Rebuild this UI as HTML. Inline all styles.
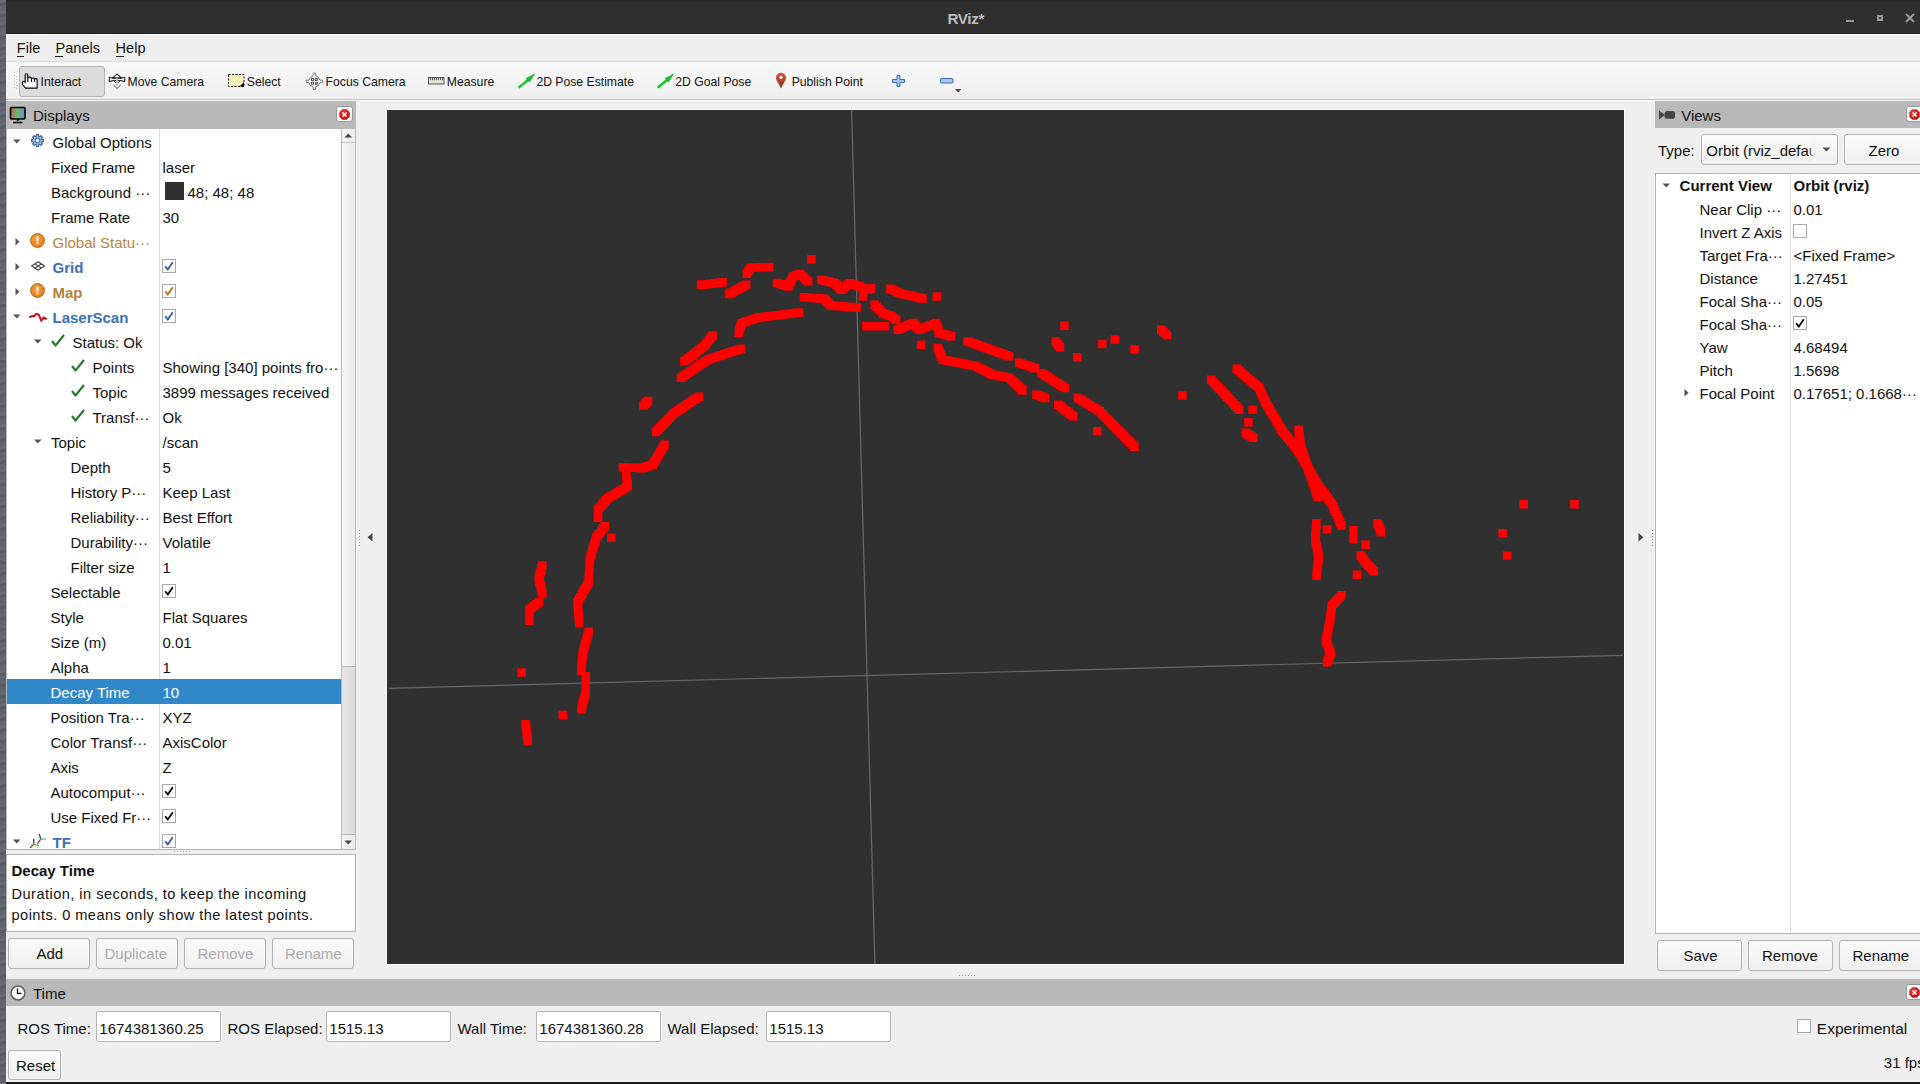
<!DOCTYPE html><html><head><meta charset="utf-8"><style>
html,body{margin:0;padding:0;}
body{width:1920px;height:1084px;overflow:hidden;position:relative;background:#5c616b;font-family:"Liberation Sans", sans-serif;}
.r{position:absolute;box-sizing:border-box;}
.t{position:absolute;white-space:nowrap;line-height:1;font-family:"Liberation Sans", sans-serif;}

</style></head><body>
<div class="r" style="left:0px;top:0px;width:6px;height:1084px;background:#5c616c;"></div>
<div class="r" style="left:0px;top:0px;width:6px;height:1084px;background:repeating-linear-gradient(170deg,rgba(255,255,255,0.05) 0 3px,rgba(0,0,0,0.06) 3px 6px,rgba(255,255,255,0.02) 6px 11px);"></div>
<div class="r" style="left:6px;top:0px;width:1914px;height:34px;background:#2f2f2f;"></div>
<div class="r" style="left:6px;top:0px;width:1914px;height:2px;background:#262626;"></div>
<div class="r" style="left:6px;top:33px;width:1914px;height:1px;background:#202020;"></div>
<div class="t" style="left:947.5px;top:11.13px;font-size:15.2px;color:#bdbdbd;font-weight:bold;letter-spacing:-0.35px;">RViz*</div>
<div class="r" style="left:1846px;top:20px;width:8px;height:2px;background:#9a9a9a;"></div>
<div class="r" style="left:1877px;top:15px;width:6px;height:6px;border:2px solid #9a9a9a;"></div>
<svg class="r" style="left:1905px;top:13px;" width="10" height="10" viewBox="0 0 10 10"><path d="M1 1L9 9M9 1L1 9" stroke="#9a9a9a" stroke-width="2"/></svg>
<div class="r" style="left:6px;top:34px;width:1914px;height:1047px;background:#efefef;"></div>
<div class="r" style="left:6px;top:1081px;width:1914px;height:1px;background:#fafafa;"></div>
<div class="r" style="left:6px;top:1082px;width:1914px;height:2px;background:#1a1a1a;"></div>
<div class="r" style="left:6px;top:34px;width:1914px;height:1px;background:#ffffff;"></div>
<div class="t" style="left:16.8px;top:40.84px;font-size:14.6px;color:#111;font-weight:normal;">File</div>
<div class="t" style="left:55.5px;top:40.84px;font-size:14.6px;color:#111;font-weight:normal;">Panels</div>
<div class="t" style="left:115.5px;top:40.84px;font-size:14.6px;color:#111;font-weight:normal;">Help</div>
<div class="r" style="left:17px;top:56px;width:7px;height:1px;background:#222;"></div>
<div class="r" style="left:55px;top:56px;width:8px;height:1px;background:#222;"></div>
<div class="r" style="left:116px;top:56px;width:8px;height:1px;background:#222;"></div>
<div class="r" style="left:6px;top:61px;width:1914px;height:1px;background:#d9d9d9;"></div>
<div class="r" style="left:6px;top:62px;width:1914px;height:37px;background:linear-gradient(180deg,#f9f9f9,#efefef);"></div>
<div class="r" style="left:6px;top:99px;width:1914px;height:1px;background:#c4c4c4;"></div>
<div class="r" style="left:6px;top:100px;width:1914px;height:1px;background:#fbfbfb;"></div>
<div class="r" style="left:14px;top:72px;width:1px;height:1px;background:#c8c8c8;"></div>
<div class="r" style="left:16px;top:73px;width:1px;height:1px;background:#c8c8c8;"></div>
<div class="r" style="left:14px;top:75px;width:1px;height:1px;background:#c8c8c8;"></div>
<div class="r" style="left:16px;top:76px;width:1px;height:1px;background:#c8c8c8;"></div>
<div class="r" style="left:14px;top:78px;width:1px;height:1px;background:#c8c8c8;"></div>
<div class="r" style="left:16px;top:79px;width:1px;height:1px;background:#c8c8c8;"></div>
<div class="r" style="left:14px;top:81px;width:1px;height:1px;background:#c8c8c8;"></div>
<div class="r" style="left:16px;top:82px;width:1px;height:1px;background:#c8c8c8;"></div>
<div class="r" style="left:14px;top:84px;width:1px;height:1px;background:#c8c8c8;"></div>
<div class="r" style="left:16px;top:85px;width:1px;height:1px;background:#c8c8c8;"></div>
<div class="r" style="left:14px;top:87px;width:1px;height:1px;background:#c8c8c8;"></div>
<div class="r" style="left:16px;top:88px;width:1px;height:1px;background:#c8c8c8;"></div>
<div class="r" style="left:19px;top:66px;width:86px;height:31px;background:#dcdcdc;border:1px solid #b5b5b5;border-radius:3px;"></div>
<div class="t" style="left:40.6px;top:76.47px;font-size:12.2px;color:#111;font-weight:normal;">Interact</div>
<div class="t" style="left:127.5px;top:76.47px;font-size:12.2px;color:#111;font-weight:normal;">Move Camera</div>
<div class="t" style="left:246.8px;top:76.47px;font-size:12.2px;color:#111;font-weight:normal;">Select</div>
<div class="t" style="left:325.6px;top:76.47px;font-size:12.2px;color:#111;font-weight:normal;">Focus Camera</div>
<div class="t" style="left:446.8px;top:76.47px;font-size:12.2px;color:#111;font-weight:normal;">Measure</div>
<div class="t" style="left:536.4px;top:76.47px;font-size:12.2px;color:#111;font-weight:normal;">2D Pose Estimate</div>
<div class="t" style="left:675.3px;top:76.47px;font-size:12.2px;color:#111;font-weight:normal;">2D Goal Pose</div>
<div class="t" style="left:791.7px;top:76.47px;font-size:12.2px;color:#111;font-weight:normal;">Publish Point</div>
<svg class="r" style="left:21px;top:72px;" width="18" height="18" viewBox="0 0 18 18"><path d="M4.2,10.6 V3 A1.3,1.3 0 0 1 6.8,3 V7 A1.85,1.85 0 0 1 10.5,7 V7.5 A1.5,1.5 0 0 1 13.5,7.5 V8 A1.325,1.325 0 0 1 16.15,8 V16.1 H4.6 L1.4,12.3 V10.9 A1.4,1.4 0 0 1 4.2,10.6 Z M6.8 7V10 M10.5 7.5V10 M13.5 8V10" fill="#fff" stroke="#000" stroke-width="1.15" stroke-linejoin="round"/></svg>
<svg class="r" style="left:108px;top:73px;" width="18" height="17" viewBox="0 0 18 17"><path d="M9 1.1L4.4 4.9H13.6Z" fill="#fff" stroke="#2a2a2a" stroke-width="1.1" stroke-linejoin="round"/><path d="M1.3 4.3L5.2 5.5H12.8L16.7 4.3V8.6L12.8 7.5H5.2L1.3 8.6Z" fill="#fff" stroke="#2a2a2a" stroke-width="1.1" stroke-linejoin="round"/><path d="M5.2 7.5L7.6 9.4H10.4L12.8 7.5" fill="none" stroke="#3a3a3a" stroke-width="1"/><path d="M9 4.8V12.5" stroke="#bbb" stroke-width="2"/><path d="M5.5 11.8L9 15.4L12.5 11.8" fill="none" stroke="#8a8a8a" stroke-width="1.1"/></svg>
<svg class="r" style="left:228px;top:74px;" width="17" height="13" viewBox="0 0 17 13"><rect x="0.5" y="0.5" width="15.5" height="12" fill="#f6f1b3" stroke="#000" stroke-width="1" stroke-dasharray="2,1.5"/><path d="M16 8V12.5H11.5Z" fill="#000"/></svg>
<svg class="r" style="left:305px;top:72px;" width="19" height="19" viewBox="0 0 19 19"><path d="M8.2 1.2H10.6V3.9A5.8 5.8 0 0 1 14.9 8.2H17.6V10.6H14.9A5.8 5.8 0 0 1 10.6 14.9V17.6H8.2V14.9A5.8 5.8 0 0 1 3.9 10.6H1.2V8.2H3.9A5.8 5.8 0 0 1 8.2 3.9Z" fill="#fbfbfb" stroke="#777" stroke-width="1"/><g fill="#5a5a5a"><rect x="6" y="6" width="3" height="3"/><rect x="9.8" y="6" width="3" height="3"/><rect x="6" y="9.8" width="3" height="3"/><rect x="9.8" y="9.8" width="3" height="3"/></g><g fill="#e8e8e8"><rect x="7" y="7" width="1" height="1"/><rect x="10.8" y="7" width="1" height="1"/><rect x="7" y="10.8" width="1" height="1"/><rect x="10.8" y="10.8" width="1" height="1"/></g></svg>
<svg class="r" style="left:428px;top:77px;" width="17" height="8" viewBox="0 0 17 8"><rect x="0.5" y="0.5" width="15.5" height="6.5" fill="#e6e4cf" stroke="#555" stroke-width="1"/><path d="M2.5 1V3.2M4.5 1V3.2M6.5 1V3.2M8.5 1V3.2M10.5 1V3.2M12.5 1V3.2M14.5 1V3.2" stroke="#555" stroke-width="1"/></svg>
<svg class="r" style="left:517.5px;top:72px;" width="18" height="17" viewBox="0 0 18 17"><path d="M1.5 15L10 8" stroke="#18c830" stroke-width="2.6" stroke-linecap="round"/><path d="M16.5 2L8 6.5L11.5 10Z" fill="#18c830" stroke="#0e9a20" stroke-width="0.6"/></svg>
<svg class="r" style="left:656.5px;top:72px;" width="18" height="17" viewBox="0 0 18 17"><path d="M1.5 15L10 8" stroke="#18c830" stroke-width="2.6" stroke-linecap="round"/><path d="M16.5 2L8 6.5L11.5 10Z" fill="#18c830" stroke="#0e9a20" stroke-width="0.6"/></svg>
<svg class="r" style="left:775px;top:72px;" width="12" height="17" viewBox="0 0 12 17"><defs><linearGradient id="pg" x1="0" y1="0" x2="0" y2="1"><stop offset="0" stop-color="#e0503a"/><stop offset="1" stop-color="#7a3a20"/></linearGradient></defs><path d="M6 16.5L1.6 8.2A5 5 0 1 1 10.4 8.2Z" fill="url(#pg)"/><circle cx="6" cy="5.3" r="1.6" fill="#fff"/></svg>
<svg class="r" style="left:892px;top:75px;" width="14" height="12" viewBox="0 0 14 12"><path d="M5 0.5H8V4.5H12.5V7.5H8V11.5H5V7.5H0.5V4.5H5Z" fill="#a9c6ec" stroke="#3b6db2" stroke-width="1"/></svg>
<svg class="r" style="left:940px;top:78px;" width="14" height="6" viewBox="0 0 14 6"><rect x="0.5" y="0.5" width="12.5" height="4.5" rx="1" fill="#a9c6ec" stroke="#3b6db2" stroke-width="1"/></svg>
<svg class="r" style="left:955px;top:89px;" width="7" height="4" viewBox="0 0 7 4"><path d="M0 0H6.5L3.25 3.5Z" fill="#444"/></svg>
<div class="r" style="left:6px;top:101px;width:350px;height:28px;background:#b9b9b9;"></div>
<svg class="r" style="left:9px;top:106px;" width="18" height="18" viewBox="0 0 18 18"><defs><linearGradient id="mg" x1="0" y1="0" x2="1" y2="0"><stop offset="0" stop-color="#d05060"/><stop offset="0.45" stop-color="#60c060"/><stop offset="1" stop-color="#8080e0"/></linearGradient></defs><rect x="1.5" y="1.5" width="14.5" height="11.5" rx="1" fill="url(#mg)" stroke="#000" stroke-width="1.6"/><path d="M8.75 13V15M4 16.5H13.5" stroke="#000" stroke-width="1.6"/></svg>
<div class="t" style="left:33px;top:107.90px;font-size:15px;color:#111;font-weight:normal;">Displays</div>
<div class="r" style="left:336px;top:106px;width:17px;height:16px;background:#fbfbfb;border:1px solid #9a9a9a;border-radius:3px;"></div>
<svg class="r" style="left:339px;top:108.5px;" width="11" height="11" viewBox="0 0 11 11"><defs><radialGradient id="cg" cx="0.4" cy="0.35" r="0.7"><stop offset="0" stop-color="#f04040"/><stop offset="1" stop-color="#b01010"/></radialGradient></defs><path d="M3.3 0.3H7.7L10.7 3.3V7.7L7.7 10.7H3.3L0.3 7.7V3.3Z" fill="url(#cg)"/><path d="M3.5 3.5L7.5 7.5M7.5 3.5L3.5 7.5" stroke="#fff" stroke-width="1.5"/></svg>
<div class="r" style="left:6px;top:129px;width:336px;height:721px;background:#fff;border-left:1px solid #b8b8b8;border-bottom:1px solid #b0b0b0;"></div>
<div class="r" style="left:159px;top:129px;width:1px;height:720px;background:#dcdcdc;"></div>
<div class="r" style="left:7px;top:679px;width:334px;height:25px;background:#3088c8;"></div>
<div class="r" style="left:7px;top:129px;width:334px;height:720px;overflow:hidden;">
<div class="t" style="left:45.50px;top:5.90px;font-size:15px;color:#111;font-weight:normal;">Global Options</div>
<div class="t" style="left:44.00px;top:30.90px;font-size:15px;color:#111;font-weight:normal;">Fixed Frame</div>
<div class="t" style="left:155.50px;top:30.90px;font-size:15px;color:#111;font-weight:normal;">laser</div>
<div class="t" style="left:44.00px;top:55.90px;font-size:15px;color:#111;font-weight:normal;">Background ···</div>
<div class="t" style="left:180.50px;top:55.90px;font-size:15px;color:#111;font-weight:normal;">48; 48; 48</div>
<div class="t" style="left:44.00px;top:80.90px;font-size:15px;color:#111;font-weight:normal;">Frame Rate</div>
<div class="t" style="left:155.50px;top:80.90px;font-size:15px;color:#111;font-weight:normal;">30</div>
<div class="t" style="left:45.50px;top:105.90px;font-size:15px;color:#b58543;font-weight:normal;">Global Statu···</div>
<div class="t" style="left:45.50px;top:130.90px;font-size:15px;color:#3a70b8;font-weight:bold;">Grid</div>
<div class="t" style="left:45.50px;top:155.90px;font-size:15px;color:#b5803a;font-weight:bold;">Map</div>
<div class="t" style="left:45.50px;top:180.90px;font-size:15px;color:#3a70b8;font-weight:bold;">LaserScan</div>
<div class="t" style="left:65.50px;top:205.90px;font-size:15px;color:#111;font-weight:normal;">Status: Ok</div>
<div class="t" style="left:85.50px;top:230.90px;font-size:15px;color:#111;font-weight:normal;">Points</div>
<div class="t" style="left:155.50px;top:230.90px;font-size:15px;color:#111;font-weight:normal;">Showing [340] points fro···</div>
<div class="t" style="left:85.50px;top:255.90px;font-size:15px;color:#111;font-weight:normal;">Topic</div>
<div class="t" style="left:155.50px;top:255.90px;font-size:15px;color:#111;font-weight:normal;">3899 messages received</div>
<div class="t" style="left:85.50px;top:280.90px;font-size:15px;color:#111;font-weight:normal;">Transf···</div>
<div class="t" style="left:155.50px;top:280.90px;font-size:15px;color:#111;font-weight:normal;">Ok</div>
<div class="t" style="left:44.00px;top:305.90px;font-size:15px;color:#111;font-weight:normal;">Topic</div>
<div class="t" style="left:155.50px;top:305.90px;font-size:15px;color:#111;font-weight:normal;">/scan</div>
<div class="t" style="left:63.50px;top:330.90px;font-size:15px;color:#111;font-weight:normal;">Depth</div>
<div class="t" style="left:155.50px;top:330.90px;font-size:15px;color:#111;font-weight:normal;">5</div>
<div class="t" style="left:63.50px;top:355.90px;font-size:15px;color:#111;font-weight:normal;">History P···</div>
<div class="t" style="left:155.50px;top:355.90px;font-size:15px;color:#111;font-weight:normal;">Keep Last</div>
<div class="t" style="left:63.50px;top:380.90px;font-size:15px;color:#111;font-weight:normal;">Reliability···</div>
<div class="t" style="left:155.50px;top:380.90px;font-size:15px;color:#111;font-weight:normal;">Best Effort</div>
<div class="t" style="left:63.50px;top:405.90px;font-size:15px;color:#111;font-weight:normal;">Durability···</div>
<div class="t" style="left:155.50px;top:405.90px;font-size:15px;color:#111;font-weight:normal;">Volatile</div>
<div class="t" style="left:63.50px;top:430.90px;font-size:15px;color:#111;font-weight:normal;">Filter size</div>
<div class="t" style="left:155.50px;top:430.90px;font-size:15px;color:#111;font-weight:normal;">1</div>
<div class="t" style="left:43.50px;top:455.90px;font-size:15px;color:#111;font-weight:normal;">Selectable</div>
<div class="t" style="left:43.50px;top:480.90px;font-size:15px;color:#111;font-weight:normal;">Style</div>
<div class="t" style="left:155.50px;top:480.90px;font-size:15px;color:#111;font-weight:normal;">Flat Squares</div>
<div class="t" style="left:43.50px;top:505.90px;font-size:15px;color:#111;font-weight:normal;">Size (m)</div>
<div class="t" style="left:155.50px;top:505.90px;font-size:15px;color:#111;font-weight:normal;">0.01</div>
<div class="t" style="left:43.50px;top:530.90px;font-size:15px;color:#111;font-weight:normal;">Alpha</div>
<div class="t" style="left:155.50px;top:530.90px;font-size:15px;color:#111;font-weight:normal;">1</div>
<div class="t" style="left:43.50px;top:555.90px;font-size:15px;color:#fff;font-weight:normal;">Decay Time</div>
<div class="t" style="left:155.50px;top:555.90px;font-size:15px;color:#fff;font-weight:normal;">10</div>
<div class="t" style="left:43.50px;top:580.90px;font-size:15px;color:#111;font-weight:normal;">Position Tra···</div>
<div class="t" style="left:155.50px;top:580.90px;font-size:15px;color:#111;font-weight:normal;">XYZ</div>
<div class="t" style="left:43.50px;top:605.90px;font-size:15px;color:#111;font-weight:normal;">Color Transf···</div>
<div class="t" style="left:155.50px;top:605.90px;font-size:15px;color:#111;font-weight:normal;">AxisColor</div>
<div class="t" style="left:43.50px;top:630.90px;font-size:15px;color:#111;font-weight:normal;">Axis</div>
<div class="t" style="left:155.50px;top:630.90px;font-size:15px;color:#111;font-weight:normal;">Z</div>
<div class="t" style="left:43.50px;top:655.90px;font-size:15px;color:#111;font-weight:normal;">Autocomput···</div>
<div class="t" style="left:43.50px;top:680.90px;font-size:15px;color:#111;font-weight:normal;">Use Fixed Fr···</div>
<div class="t" style="left:45.50px;top:705.90px;font-size:15px;color:#3a70b8;font-weight:bold;">TF</div>
<svg class="r" style="left:6.00px;top:10.00px;" width="8" height="5" viewBox="0 0 8 5"><path d="M0 0.5H7.5L3.75 4.5Z" fill="#555"/></svg>
<svg class="r" style="left:8.00px;top:108.50px;" width="5" height="8" viewBox="0 0 5 8"><path d="M0.5 0V7.5L4.5 3.75Z" fill="#555"/></svg>
<svg class="r" style="left:8.00px;top:133.50px;" width="5" height="8" viewBox="0 0 5 8"><path d="M0.5 0V7.5L4.5 3.75Z" fill="#555"/></svg>
<svg class="r" style="left:8.00px;top:158.50px;" width="5" height="8" viewBox="0 0 5 8"><path d="M0.5 0V7.5L4.5 3.75Z" fill="#555"/></svg>
<svg class="r" style="left:6.00px;top:185.00px;" width="8" height="5" viewBox="0 0 8 5"><path d="M0 0.5H7.5L3.75 4.5Z" fill="#555"/></svg>
<svg class="r" style="left:27.00px;top:210.00px;" width="8" height="5" viewBox="0 0 8 5"><path d="M0 0.5H7.5L3.75 4.5Z" fill="#555"/></svg>
<svg class="r" style="left:27.00px;top:310.00px;" width="8" height="5" viewBox="0 0 8 5"><path d="M0 0.5H7.5L3.75 4.5Z" fill="#555"/></svg>
<svg class="r" style="left:6.00px;top:710.00px;" width="8" height="5" viewBox="0 0 8 5"><path d="M0 0.5H7.5L3.75 4.5Z" fill="#555"/></svg>
<svg class="r" style="left:23.00px;top:4.00px;" width="15" height="15" viewBox="0 0 15 15"><path d="M5.82 3.43 L6.36 3.25 L6.36 1.61 L8.64 1.61 L8.64 3.25 L9.18 3.43 L9.70 3.69 L10.86 2.53 L12.47 4.14 L11.31 5.30 L11.57 5.82 L11.75 6.36 L13.39 6.36 L13.39 8.64 L11.75 8.64 L11.57 9.18 L11.31 9.70 L12.47 10.86 L10.86 12.47 L9.70 11.31 L9.18 11.57 L8.64 11.75 L8.64 13.39 L6.36 13.39 L6.36 11.75 L5.82 11.57 L5.30 11.31 L4.14 12.47 L2.53 10.86 L3.69 9.70 L3.43 9.18 L3.25 8.64 L1.61 8.64 L1.61 6.36 L3.25 6.36 L3.43 5.82 L3.69 5.30 L2.53 4.14 L4.14 2.53 L5.30 3.69Z" fill="#a8c6f2" stroke="#3d5d90" stroke-width="1.1" stroke-linejoin="round"/><circle cx="7.5" cy="7.5" r="2.4" fill="#c8e6ff" stroke="#4a72aa" stroke-width="1.1"/><circle cx="7.5" cy="7.5" r="0.9" fill="#e8f8ff"/></svg>
<svg class="r" style="left:23.00px;top:103.60px;" width="15" height="15" viewBox="0 0 15 15"><defs><radialGradient id="og4" cx="0.45" cy="0.4" r="0.6"><stop offset="0" stop-color="#f7a040"/><stop offset="1" stop-color="#ec7e14"/></radialGradient></defs><circle cx="7.5" cy="7.5" r="6.9" fill="url(#og4)" stroke="#a86418" stroke-width="1"/><rect x="6.4" y="3.2" width="2.2" height="5.2" rx="0.6" fill="#fff6d8"/><rect x="6.4" y="9.3" width="2.2" height="1.9" fill="#fff6d8"/></svg>
<svg class="r" style="left:23.00px;top:153.60px;" width="15" height="15" viewBox="0 0 15 15"><defs><radialGradient id="og6" cx="0.45" cy="0.4" r="0.6"><stop offset="0" stop-color="#f7a040"/><stop offset="1" stop-color="#ec7e14"/></radialGradient></defs><circle cx="7.5" cy="7.5" r="6.9" fill="url(#og6)" stroke="#a86418" stroke-width="1"/><rect x="6.4" y="3.2" width="2.2" height="5.2" rx="0.6" fill="#fff6d8"/><rect x="6.4" y="9.3" width="2.2" height="1.9" fill="#fff6d8"/></svg>
<svg class="r" style="left:24.00px;top:131.50px;" width="15" height="11" viewBox="0 0 15 11"><g fill="none" stroke="#333" stroke-width="1.1"><path d="M7 0.8L13.5 5L7 9.2L0.5 5Z"/><path d="M3.8 2.9L10.3 7.1M10.3 2.9L3.8 7.1"/></g></svg>
<svg class="r" style="left:22.00px;top:182.00px;" width="18" height="12" viewBox="0 0 18 12"><path d="M1 6L3.5 4.8L5 5.5L7 2.8L9.8 3.6L12.3 9.8L14.5 6.5L17 7.8" fill="none" stroke="#d01010" stroke-width="2" stroke-linejoin="round" stroke-linecap="round"/></svg>
<svg class="r" style="left:44.00px;top:205.00px;" width="14" height="13" viewBox="0 0 14 13"><path d="M1 7L4.5 11.5L13 1" fill="none" stroke="#2a7a30" stroke-width="2.2" stroke-linejoin="round"/></svg>
<svg class="r" style="left:64.00px;top:230.00px;" width="14" height="13" viewBox="0 0 14 13"><path d="M1 7L4.5 11.5L13 1" fill="none" stroke="#2a7a30" stroke-width="2.2" stroke-linejoin="round"/></svg>
<svg class="r" style="left:64.00px;top:255.00px;" width="14" height="13" viewBox="0 0 14 13"><path d="M1 7L4.5 11.5L13 1" fill="none" stroke="#2a7a30" stroke-width="2.2" stroke-linejoin="round"/></svg>
<svg class="r" style="left:64.00px;top:280.00px;" width="14" height="13" viewBox="0 0 14 13"><path d="M1 7L4.5 11.5L13 1" fill="none" stroke="#2a7a30" stroke-width="2.2" stroke-linejoin="round"/></svg>
<svg class="r" style="left:155.00px;top:130.00px;" width="14" height="14" viewBox="0 0 14 14"><rect x="0.5" y="0.5" width="13" height="13" fill="#fff" stroke="#a8a8a8" stroke-width="1"/><path d="M3.2 7.2L5.8 10.5L10.8 3.2" fill="none" stroke="#2a5aa8" stroke-width="1.8" stroke-linejoin="miter"/></svg>
<svg class="r" style="left:155.00px;top:155.00px;" width="14" height="14" viewBox="0 0 14 14"><rect x="0.5" y="0.5" width="13" height="13" fill="#fff" stroke="#a8a8a8" stroke-width="1"/><path d="M3.2 7.2L5.8 10.5L10.8 3.2" fill="none" stroke="#b07020" stroke-width="1.8" stroke-linejoin="miter"/></svg>
<svg class="r" style="left:155.00px;top:180.00px;" width="14" height="14" viewBox="0 0 14 14"><rect x="0.5" y="0.5" width="13" height="13" fill="#fff" stroke="#a8a8a8" stroke-width="1"/><path d="M3.2 7.2L5.8 10.5L10.8 3.2" fill="none" stroke="#2a5aa8" stroke-width="1.8" stroke-linejoin="miter"/></svg>
<svg class="r" style="left:155.00px;top:455.00px;" width="14" height="14" viewBox="0 0 14 14"><rect x="0.5" y="0.5" width="13" height="13" fill="#fff" stroke="#a8a8a8" stroke-width="1"/><path d="M3.2 7.2L5.8 10.5L10.8 3.2" fill="none" stroke="#000" stroke-width="1.8" stroke-linejoin="miter"/></svg>
<svg class="r" style="left:155.00px;top:655.00px;" width="14" height="14" viewBox="0 0 14 14"><rect x="0.5" y="0.5" width="13" height="13" fill="#fff" stroke="#a8a8a8" stroke-width="1"/><path d="M3.2 7.2L5.8 10.5L10.8 3.2" fill="none" stroke="#000" stroke-width="1.8" stroke-linejoin="miter"/></svg>
<svg class="r" style="left:155.00px;top:680.00px;" width="14" height="14" viewBox="0 0 14 14"><rect x="0.5" y="0.5" width="13" height="13" fill="#fff" stroke="#a8a8a8" stroke-width="1"/><path d="M3.2 7.2L5.8 10.5L10.8 3.2" fill="none" stroke="#000" stroke-width="1.8" stroke-linejoin="miter"/></svg>
<svg class="r" style="left:155.00px;top:705.00px;" width="14" height="14" viewBox="0 0 14 14"><rect x="0.5" y="0.5" width="13" height="13" fill="#fff" stroke="#a8a8a8" stroke-width="1"/><path d="M3.2 7.2L5.8 10.5L10.8 3.2" fill="none" stroke="#2a5aa8" stroke-width="1.8" stroke-linejoin="miter"/></svg>
<div class="r" style="left:158.00px;top:53.00px;width:19px;height:18px;background:#303030;"></div>
<svg class="r" style="left:22.00px;top:703.00px;" width="18" height="17" viewBox="0 0 18 17"><g stroke-width="1.3" stroke-linecap="round" fill="none"><path d="M4.7 12.2L1.5 15.5" stroke="#d02020"/><path d="M4.7 12.2V7.5" stroke="#303a90"/><path d="M4.7 12.2L9.5 13.5" stroke="#50d050"/><path d="M8.75 11.2L11.7 7.1" stroke="#c02818"/><path d="M11.7 7.1L10.4 2.4" stroke="#282a80"/><path d="M11.7 7.1H16.4" stroke="#50d050"/></g></svg>
</div>
<div class="r" style="left:341px;top:129px;width:15px;height:721px;background:linear-gradient(90deg,#f6f6f6,#ececec);border-left:1px solid #b8b8b8;border-right:1px solid #b8b8b8;border-bottom:1px solid #b0b0b0;"></div>
<div class="r" style="left:342px;top:142px;width:13px;height:1px;background:#c4c4c4;"></div>
<svg class="r" style="left:344px;top:133px;" width="9" height="5" viewBox="0 0 9 5"><path d="M0.5 4.5H8L4.25 0.5Z" fill="#444"/></svg>
<div class="r" style="left:342px;top:666px;width:13px;height:169px;background:linear-gradient(90deg,#e6e6e6,#dcdcdc);border-top:1px solid #b4b4b4;border-bottom:1px solid #b4b4b4;"></div>
<svg class="r" style="left:344px;top:840px;" width="9" height="5" viewBox="0 0 9 5"><path d="M0.5 0.5H8L4.25 4.5Z" fill="#444"/></svg>
<div class="r" style="left:174px;top:851px;width:1px;height:1px;background:#aaa;"></div>
<div class="r" style="left:177px;top:851px;width:1px;height:1px;background:#aaa;"></div>
<div class="r" style="left:180px;top:851px;width:1px;height:1px;background:#aaa;"></div>
<div class="r" style="left:183px;top:851px;width:1px;height:1px;background:#aaa;"></div>
<div class="r" style="left:186px;top:851px;width:1px;height:1px;background:#aaa;"></div>
<div class="r" style="left:189px;top:851px;width:1px;height:1px;background:#aaa;"></div>
<div class="r" style="left:6px;top:854px;width:350px;height:78px;background:#fff;border:1px solid #b4b4b4;border-left:1px solid #b4b4b4;"></div>
<div class="t" style="left:11.5px;top:863.10px;font-size:15px;color:#111;font-weight:bold;">Decay Time</div>
<div class="t" style="left:11.5px;top:886.54px;font-size:14.6px;color:#111;font-weight:normal;letter-spacing:0.46px;">Duration, in seconds, to keep the incoming</div>
<div class="t" style="left:11.5px;top:908.34px;font-size:14.6px;color:#111;font-weight:normal;letter-spacing:0.45px;">points. 0 means only show the latest points.</div>
<div class="r" style="left:8px;top:938px;width:82px;height:31px;background:linear-gradient(180deg,#fbfbfb,#efefef);border:1px solid #b3b3b3;border-radius:3px;"></div>
<div class="t" style="left:36.5px;top:946.10px;font-size:15px;color:#111;font-weight:normal;">Add</div>
<div class="r" style="left:96px;top:938px;width:82px;height:31px;background:linear-gradient(180deg,#fbfbfb,#efefef);border:1px solid #b3b3b3;border-radius:3px;"></div>
<div class="t" style="left:104.5px;top:946.10px;font-size:15px;color:#ababab;font-weight:normal;">Duplicate</div>
<div class="r" style="left:184px;top:938px;width:82px;height:31px;background:linear-gradient(180deg,#fbfbfb,#efefef);border:1px solid #b3b3b3;border-radius:3px;"></div>
<div class="t" style="left:197.5px;top:946.10px;font-size:15px;color:#ababab;font-weight:normal;">Remove</div>
<div class="r" style="left:272px;top:938px;width:82px;height:31px;background:linear-gradient(180deg,#fbfbfb,#efefef);border:1px solid #b3b3b3;border-radius:3px;"></div>
<div class="t" style="left:285px;top:946.10px;font-size:15px;color:#ababab;font-weight:normal;">Rename</div>
<div class="r" style="left:386px;top:109px;width:1239px;height:856px;background:#202020;border:1px solid #fafafa;"></div>
<div class="r" style="left:387px;top:110px;width:1237px;height:854px;background:#303030;"></div>
<svg class="r" style="left:387px;top:110px;" width="1237" height="854" viewBox="0 0 1237 854"><line x1="464.6" y1="0" x2="487.9" y2="854" stroke="#6a6a6a" stroke-width="1.2"/><line x1="2" y1="578.3" x2="1236" y2="545.3" stroke="#6a6a6a" stroke-width="1.2"/><g fill="none" stroke="#ff0000" stroke-width="9" stroke-linecap="square" stroke-linejoin="miter"><path d="M309.8 170.6h8.5v8.5h-8.5zM312.5 170.2h8.5v8.5h-8.5zM315.1 169.9h8.5v8.5h-8.5zM317.9 169.6h8.5v8.5h-8.5zM320.5 169.4h8.5v8.5h-8.5zM323.2 169.1h8.5v8.5h-8.5zM326.0 168.8h8.5v8.5h-8.5zM328.6 168.4h8.5v8.5h-8.5zM331.4 168.1h8.5v8.5h-8.5zM337.8 179.8h8.5v8.5h-8.5zM340.2 178.4h8.5v8.5h-8.5zM342.6 177.1h8.5v8.5h-8.5zM345.0 175.8h8.5v8.5h-8.5zM347.5 174.5h8.5v8.5h-8.5zM349.9 173.2h8.5v8.5h-8.5zM352.3 171.9h8.5v8.5h-8.5zM354.8 170.6h8.5v8.5h-8.5zM355.6 159.4h8.5v8.5h-8.5zM357.0 157.4h8.5v8.5h-8.5zM358.3 155.4h8.5v8.5h-8.5zM359.6 153.4h8.5v8.5h-8.5zM362.2 153.3h8.5v8.5h-8.5zM364.8 153.2h8.5v8.5h-8.5zM367.4 153.1h8.5v8.5h-8.5zM370.0 153.0h8.5v8.5h-8.5zM372.6 152.9h8.5v8.5h-8.5zM375.2 152.8h8.5v8.5h-8.5zM377.8 152.8h8.5v8.5h-8.5zM385.8 168.8h8.5v8.5h-8.5zM347.5 218.4h8.5v8.5h-8.5zM348.2 216.0h8.5v8.5h-8.5zM348.9 213.6h8.5v8.5h-8.5zM349.5 211.2h8.5v8.5h-8.5zM350.2 208.9h8.5v8.5h-8.5zM353.0 208.0h8.5v8.5h-8.5zM355.6 207.1h8.5v8.5h-8.5zM358.4 206.1h8.5v8.5h-8.5zM361.1 205.2h8.5v8.5h-8.5zM363.8 204.4h8.5v8.5h-8.5zM366.5 203.4h8.5v8.5h-8.5zM369.4 203.1h8.5v8.5h-8.5zM372.4 202.7h8.5v8.5h-8.5zM375.4 202.3h8.5v8.5h-8.5zM378.3 202.0h8.5v8.5h-8.5zM381.3 201.6h8.5v8.5h-8.5zM384.3 201.2h8.5v8.5h-8.5zM387.2 200.9h8.5v8.5h-8.5zM390.2 200.5h8.5v8.5h-8.5zM393.2 200.1h8.5v8.5h-8.5zM396.2 199.7h8.5v8.5h-8.5zM399.1 199.4h8.5v8.5h-8.5zM402.1 199.0h8.5v8.5h-8.5zM405.1 198.6h8.5v8.5h-8.5zM408.0 198.2h8.5v8.5h-8.5zM293.1 247.1h8.5v8.5h-8.5zM295.3 245.4h8.5v8.5h-8.5zM297.5 243.7h8.5v8.5h-8.5zM299.7 242.1h8.5v8.5h-8.5zM301.9 240.4h8.5v8.5h-8.5zM304.0 238.7h8.5v8.5h-8.5zM306.2 237.1h8.5v8.5h-8.5zM308.4 235.4h8.5v8.5h-8.5zM310.6 233.7h8.5v8.5h-8.5zM312.8 232.1h8.5v8.5h-8.5zM314.5 229.9h8.5v8.5h-8.5zM316.2 227.7h8.5v8.5h-8.5zM317.9 225.6h8.5v8.5h-8.5zM319.6 223.4h8.5v8.5h-8.5zM321.4 221.2h8.5v8.5h-8.5zM289.8 263.6h8.5v8.5h-8.5zM292.2 262.0h8.5v8.5h-8.5zM294.6 260.3h8.5v8.5h-8.5zM297.0 258.7h8.5v8.5h-8.5zM299.4 257.0h8.5v8.5h-8.5zM301.8 255.3h8.5v8.5h-8.5zM304.3 253.7h8.5v8.5h-8.5zM306.7 252.0h8.5v8.5h-8.5zM309.1 250.3h8.5v8.5h-8.5zM311.5 248.7h8.5v8.5h-8.5zM313.9 247.0h8.5v8.5h-8.5zM316.4 245.4h8.5v8.5h-8.5zM319.1 244.5h8.5v8.5h-8.5zM321.9 243.6h8.5v8.5h-8.5zM324.7 242.7h8.5v8.5h-8.5zM327.5 241.8h8.5v8.5h-8.5zM330.2 240.9h8.5v8.5h-8.5zM333.0 240.0h8.5v8.5h-8.5zM335.8 239.1h8.5v8.5h-8.5zM338.5 238.2h8.5v8.5h-8.5zM341.3 237.2h8.5v8.5h-8.5zM344.1 236.4h8.5v8.5h-8.5zM346.9 235.4h8.5v8.5h-8.5zM349.6 234.6h8.5v8.5h-8.5zM252.2 291.2h8.5v8.5h-8.5zM253.8 289.8h8.5v8.5h-8.5zM255.2 288.2h8.5v8.5h-8.5zM256.8 286.8h8.5v8.5h-8.5zM264.9 317.8h8.5v8.5h-8.5zM266.8 315.7h8.5v8.5h-8.5zM268.8 313.6h8.5v8.5h-8.5zM270.8 311.6h8.5v8.5h-8.5zM272.7 309.5h8.5v8.5h-8.5zM274.7 307.5h8.5v8.5h-8.5zM276.6 305.4h8.5v8.5h-8.5zM278.6 303.4h8.5v8.5h-8.5zM280.6 301.3h8.5v8.5h-8.5zM282.5 299.2h8.5v8.5h-8.5zM284.8 297.7h8.5v8.5h-8.5zM287.1 296.2h8.5v8.5h-8.5zM289.4 294.6h8.5v8.5h-8.5zM291.7 293.1h8.5v8.5h-8.5zM294.0 291.6h8.5v8.5h-8.5zM296.2 290.0h8.5v8.5h-8.5zM298.5 288.5h8.5v8.5h-8.5zM300.8 287.0h8.5v8.5h-8.5zM303.1 285.4h8.5v8.5h-8.5zM305.4 283.9h8.5v8.5h-8.5zM307.6 282.4h8.5v8.5h-8.5zM420.2 144.9h8.5v8.5h-8.5zM387.0 168.9h8.5v8.5h-8.5zM389.5 169.8h8.5v8.5h-8.5zM392.0 170.6h8.5v8.5h-8.5zM394.5 171.4h8.5v8.5h-8.5zM397.0 172.2h8.5v8.5h-8.5zM398.2 169.8h8.5v8.5h-8.5zM399.5 167.2h8.5v8.5h-8.5zM400.7 164.8h8.5v8.5h-8.5zM402.0 162.2h8.5v8.5h-8.5zM404.2 161.4h8.5v8.5h-8.5zM406.4 160.6h8.5v8.5h-8.5zM408.6 159.8h8.5v8.5h-8.5zM410.7 161.6h8.5v8.5h-8.5zM412.8 163.5h8.5v8.5h-8.5zM414.9 165.4h8.5v8.5h-8.5zM417.0 167.2h8.5v8.5h-8.5zM430.2 165.6h8.5v8.5h-8.5zM432.9 166.3h8.5v8.5h-8.5zM435.6 167.0h8.5v8.5h-8.5zM438.2 167.6h8.5v8.5h-8.5zM440.9 168.3h8.5v8.5h-8.5zM443.5 168.9h8.5v8.5h-8.5zM445.2 170.6h8.5v8.5h-8.5zM446.8 172.2h8.5v8.5h-8.5zM448.5 173.9h8.5v8.5h-8.5zM450.1 175.6h8.5v8.5h-8.5zM452.2 173.9h8.5v8.5h-8.5zM454.3 172.2h8.5v8.5h-8.5zM456.4 170.6h8.5v8.5h-8.5zM458.5 168.9h8.5v8.5h-8.5zM461.0 169.8h8.5v8.5h-8.5zM463.5 170.6h8.5v8.5h-8.5zM466.0 171.4h8.5v8.5h-8.5zM468.5 172.2h8.5v8.5h-8.5zM471.2 173.4h8.5v8.5h-8.5zM474.0 174.4h8.5v8.5h-8.5zM476.8 175.6h8.5v8.5h-8.5zM478.4 174.8h8.5v8.5h-8.5zM480.0 173.9h8.5v8.5h-8.5zM471.8 182.2h8.5v8.5h-8.5zM499.1 174.4h8.5v8.5h-8.5zM501.5 175.5h8.5v8.5h-8.5zM503.9 176.7h8.5v8.5h-8.5zM506.3 177.9h8.5v8.5h-8.5zM508.6 179.1h8.5v8.5h-8.5zM511.5 179.7h8.5v8.5h-8.5zM514.3 180.4h8.5v8.5h-8.5zM517.1 181.0h8.5v8.5h-8.5zM520.0 181.6h8.5v8.5h-8.5zM522.8 182.3h8.5v8.5h-8.5zM525.6 182.9h8.5v8.5h-8.5zM528.4 183.6h8.5v8.5h-8.5zM531.2 184.2h8.5v8.5h-8.5zM545.6 182.2h8.5v8.5h-8.5zM412.8 183.1h8.5v8.5h-8.5zM415.6 183.3h8.5v8.5h-8.5zM418.5 183.5h8.5v8.5h-8.5zM421.4 183.7h8.5v8.5h-8.5zM424.2 183.9h8.5v8.5h-8.5zM427.1 184.1h8.5v8.5h-8.5zM430.0 184.3h8.5v8.5h-8.5zM432.9 184.4h8.5v8.5h-8.5zM434.5 186.1h8.5v8.5h-8.5zM436.2 187.9h8.5v8.5h-8.5zM437.9 189.6h8.5v8.5h-8.5zM439.5 191.2h8.5v8.5h-8.5zM442.4 191.5h8.5v8.5h-8.5zM445.3 191.7h8.5v8.5h-8.5zM448.1 191.9h8.5v8.5h-8.5zM451.0 192.1h8.5v8.5h-8.5zM453.9 192.4h8.5v8.5h-8.5zM456.8 192.6h8.5v8.5h-8.5zM459.6 192.8h8.5v8.5h-8.5zM462.5 193.0h8.5v8.5h-8.5zM465.4 193.2h8.5v8.5h-8.5zM475.0 212.1h8.5v8.5h-8.5zM477.7 212.1h8.5v8.5h-8.5zM480.3 212.1h8.5v8.5h-8.5zM482.9 212.1h8.5v8.5h-8.5zM485.5 212.1h8.5v8.5h-8.5zM488.1 212.1h8.5v8.5h-8.5zM490.7 212.1h8.5v8.5h-8.5zM493.4 212.1h8.5v8.5h-8.5zM483.4 190.6h8.5v8.5h-8.5zM485.4 192.6h8.5v8.5h-8.5zM487.5 194.7h8.5v8.5h-8.5zM489.6 196.8h8.5v8.5h-8.5zM491.6 198.9h8.5v8.5h-8.5zM494.4 199.9h8.5v8.5h-8.5zM497.2 201.1h8.5v8.5h-8.5zM500.0 202.1h8.5v8.5h-8.5zM502.5 203.8h8.5v8.5h-8.5zM505.0 205.4h8.5v8.5h-8.5zM506.6 215.4h8.5v8.5h-8.5zM509.1 214.3h8.5v8.5h-8.5zM511.6 213.2h8.5v8.5h-8.5zM514.1 212.1h8.5v8.5h-8.5zM516.6 211.0h8.5v8.5h-8.5zM519.1 209.9h8.5v8.5h-8.5zM521.5 208.8h8.5v8.5h-8.5zM523.2 210.4h8.5v8.5h-8.5zM524.9 212.1h8.5v8.5h-8.5zM526.6 213.8h8.5v8.5h-8.5zM528.2 215.4h8.5v8.5h-8.5zM531.0 214.3h8.5v8.5h-8.5zM533.8 213.2h8.5v8.5h-8.5zM536.5 212.1h8.5v8.5h-8.5zM539.3 211.0h8.5v8.5h-8.5zM542.1 209.9h8.5v8.5h-8.5zM544.9 208.8h8.5v8.5h-8.5zM545.7 211.2h8.5v8.5h-8.5zM546.5 213.8h8.5v8.5h-8.5zM547.3 216.2h8.5v8.5h-8.5zM548.1 218.8h8.5v8.5h-8.5zM550.5 219.4h8.5v8.5h-8.5zM552.8 220.1h8.5v8.5h-8.5zM555.1 220.7h8.5v8.5h-8.5zM557.4 221.4h8.5v8.5h-8.5zM559.8 222.1h8.5v8.5h-8.5zM529.9 230.4h8.5v8.5h-8.5zM546.5 233.8h8.5v8.5h-8.5zM547.5 236.1h8.5v8.5h-8.5zM548.5 238.4h8.5v8.5h-8.5zM549.5 240.7h8.5v8.5h-8.5zM550.5 243.0h8.5v8.5h-8.5zM551.5 245.4h8.5v8.5h-8.5zM554.2 245.9h8.5v8.5h-8.5zM557.0 246.5h8.5v8.5h-8.5zM559.8 247.0h8.5v8.5h-8.5zM562.6 247.6h8.5v8.5h-8.5zM565.3 248.1h8.5v8.5h-8.5zM568.1 248.7h8.5v8.5h-8.5zM570.9 249.3h8.5v8.5h-8.5zM573.6 249.8h8.5v8.5h-8.5zM576.4 250.4h8.5v8.5h-8.5zM579.2 250.9h8.5v8.5h-8.5zM582.0 251.5h8.5v8.5h-8.5zM584.8 252.1h8.5v8.5h-8.5zM587.1 253.2h8.5v8.5h-8.5zM589.5 254.4h8.5v8.5h-8.5zM591.9 255.6h8.5v8.5h-8.5zM594.2 256.8h8.5v8.5h-8.5zM596.6 258.0h8.5v8.5h-8.5zM599.0 259.2h8.5v8.5h-8.5zM601.4 260.4h8.5v8.5h-8.5zM604.1 260.9h8.5v8.5h-8.5zM606.9 261.4h8.5v8.5h-8.5zM609.7 262.0h8.5v8.5h-8.5zM612.4 262.6h8.5v8.5h-8.5zM615.2 263.1h8.5v8.5h-8.5zM618.0 263.6h8.5v8.5h-8.5zM619.9 265.4h8.5v8.5h-8.5zM621.8 267.2h8.5v8.5h-8.5zM623.6 269.0h8.5v8.5h-8.5zM625.6 270.7h8.5v8.5h-8.5zM627.5 272.5h8.5v8.5h-8.5zM629.4 274.3h8.5v8.5h-8.5zM631.2 276.1h8.5v8.5h-8.5zM576.4 227.1h8.5v8.5h-8.5zM579.1 228.1h8.5v8.5h-8.5zM581.9 229.1h8.5v8.5h-8.5zM584.7 230.1h8.5v8.5h-8.5zM587.4 231.1h8.5v8.5h-8.5zM590.2 232.1h8.5v8.5h-8.5zM593.0 233.1h8.5v8.5h-8.5zM595.8 234.1h8.5v8.5h-8.5zM598.5 235.1h8.5v8.5h-8.5zM601.3 236.1h8.5v8.5h-8.5zM604.1 237.1h8.5v8.5h-8.5zM606.9 238.1h8.5v8.5h-8.5zM609.6 239.1h8.5v8.5h-8.5zM612.4 240.1h8.5v8.5h-8.5zM615.2 241.1h8.5v8.5h-8.5zM618.0 242.1h8.5v8.5h-8.5zM627.9 248.6h8.5v8.5h-8.5zM630.5 249.5h8.5v8.5h-8.5zM633.2 250.4h8.5v8.5h-8.5zM635.8 251.2h8.5v8.5h-8.5zM638.5 252.1h8.5v8.5h-8.5zM641.1 253.0h8.5v8.5h-8.5zM643.8 253.9h8.5v8.5h-8.5zM650.3 258.9h8.5v8.5h-8.5zM652.7 260.3h8.5v8.5h-8.5zM655.0 261.8h8.5v8.5h-8.5zM657.3 263.3h8.5v8.5h-8.5zM659.7 264.8h8.5v8.5h-8.5zM662.0 266.3h8.5v8.5h-8.5zM664.3 267.8h8.5v8.5h-8.5zM666.7 269.3h8.5v8.5h-8.5zM669.0 270.8h8.5v8.5h-8.5zM671.3 272.3h8.5v8.5h-8.5zM673.7 273.8h8.5v8.5h-8.5zM630.5 276.2h8.5v8.5h-8.5zM645.3 280.4h8.5v8.5h-8.5zM648.1 281.6h8.5v8.5h-8.5zM650.9 282.6h8.5v8.5h-8.5zM653.7 283.8h8.5v8.5h-8.5zM667.0 290.4h8.5v8.5h-8.5zM669.1 292.1h8.5v8.5h-8.5zM671.2 293.8h8.5v8.5h-8.5zM673.4 295.4h8.5v8.5h-8.5zM675.5 297.1h8.5v8.5h-8.5zM677.7 298.7h8.5v8.5h-8.5zM679.8 300.4h8.5v8.5h-8.5zM682.0 302.1h8.5v8.5h-8.5zM686.8 283.8h8.5v8.5h-8.5zM689.2 285.2h8.5v8.5h-8.5zM691.6 286.7h8.5v8.5h-8.5zM694.0 288.2h8.5v8.5h-8.5zM696.5 289.7h8.5v8.5h-8.5zM698.8 291.1h8.5v8.5h-8.5zM701.2 292.6h8.5v8.5h-8.5zM703.7 294.1h8.5v8.5h-8.5zM706.0 295.6h8.5v8.5h-8.5zM708.5 297.1h8.5v8.5h-8.5zM710.5 299.2h8.5v8.5h-8.5zM712.6 301.2h8.5v8.5h-8.5zM714.6 303.4h8.5v8.5h-8.5zM716.7 305.4h8.5v8.5h-8.5zM718.7 307.6h8.5v8.5h-8.5zM720.8 309.7h8.5v8.5h-8.5zM722.8 311.8h8.5v8.5h-8.5zM724.9 313.9h8.5v8.5h-8.5zM726.9 315.9h8.5v8.5h-8.5zM729.0 318.1h8.5v8.5h-8.5zM731.0 320.1h8.5v8.5h-8.5zM733.1 322.2h8.5v8.5h-8.5zM735.1 324.4h8.5v8.5h-8.5zM737.2 326.4h8.5v8.5h-8.5zM739.2 328.6h8.5v8.5h-8.5zM741.3 330.6h8.5v8.5h-8.5zM743.3 332.8h8.5v8.5h-8.5zM673.2 211.4h8.5v8.5h-8.5zM664.5 227.2h8.5v8.5h-8.5zM665.9 229.2h8.5v8.5h-8.5zM667.2 231.1h8.5v8.5h-8.5zM668.7 233.1h8.5v8.5h-8.5zM686.0 243.1h8.5v8.5h-8.5zM711.0 229.8h8.5v8.5h-8.5zM723.5 225.2h8.5v8.5h-8.5zM743.3 235.2h8.5v8.5h-8.5zM770.0 215.6h8.5v8.5h-8.5zM771.9 217.5h8.5v8.5h-8.5zM773.8 219.3h8.5v8.5h-8.5zM775.8 221.1h8.5v8.5h-8.5zM791.2 281.2h8.5v8.5h-8.5zM706.0 316.9h8.5v8.5h-8.5zM819.8 265.4h8.5v8.5h-8.5zM821.8 267.6h8.5v8.5h-8.5zM823.8 269.7h8.5v8.5h-8.5zM825.8 271.9h8.5v8.5h-8.5zM827.8 274.0h8.5v8.5h-8.5zM829.9 276.1h8.5v8.5h-8.5zM831.9 278.3h8.5v8.5h-8.5zM833.9 280.4h8.5v8.5h-8.5zM835.9 282.5h8.5v8.5h-8.5zM837.9 284.7h8.5v8.5h-8.5zM840.0 286.8h8.5v8.5h-8.5zM842.0 288.9h8.5v8.5h-8.5zM844.0 291.1h8.5v8.5h-8.5zM846.0 293.2h8.5v8.5h-8.5zM848.0 295.4h8.5v8.5h-8.5zM861.3 295.4h8.5v8.5h-8.5zM857.2 307.9h8.5v8.5h-8.5zM854.7 318.6h8.5v8.5h-8.5zM856.5 319.9h8.5v8.5h-8.5zM858.4 321.1h8.5v8.5h-8.5zM860.3 322.4h8.5v8.5h-8.5zM862.2 323.6h8.5v8.5h-8.5zM845.5 254.6h8.5v8.5h-8.5zM847.8 256.6h8.5v8.5h-8.5zM850.0 258.5h8.5v8.5h-8.5zM852.3 260.4h8.5v8.5h-8.5zM854.5 262.3h8.5v8.5h-8.5zM856.8 264.2h8.5v8.5h-8.5zM859.0 266.1h8.5v8.5h-8.5zM861.2 268.0h8.5v8.5h-8.5zM863.5 269.9h8.5v8.5h-8.5zM865.7 271.8h8.5v8.5h-8.5zM868.0 273.8h8.5v8.5h-8.5zM869.0 276.2h8.5v8.5h-8.5zM870.2 278.8h8.5v8.5h-8.5zM871.2 281.2h8.5v8.5h-8.5zM872.3 283.8h8.5v8.5h-8.5zM873.5 286.2h8.5v8.5h-8.5zM874.5 288.8h8.5v8.5h-8.5zM876.1 291.3h8.5v8.5h-8.5zM877.6 293.9h8.5v8.5h-8.5zM879.1 296.4h8.5v8.5h-8.5zM880.6 299.0h8.5v8.5h-8.5zM882.1 301.6h8.5v8.5h-8.5zM883.7 304.1h8.5v8.5h-8.5zM885.2 306.7h8.5v8.5h-8.5zM886.7 309.3h8.5v8.5h-8.5zM888.2 311.8h8.5v8.5h-8.5zM889.7 314.4h8.5v8.5h-8.5zM891.2 316.9h8.5v8.5h-8.5zM893.0 319.2h8.5v8.5h-8.5zM894.8 321.4h8.5v8.5h-8.5zM896.5 323.6h8.5v8.5h-8.5zM898.3 325.8h8.5v8.5h-8.5zM900.1 328.1h8.5v8.5h-8.5zM901.9 330.3h8.5v8.5h-8.5zM903.6 332.5h8.5v8.5h-8.5zM905.4 334.7h8.5v8.5h-8.5zM907.2 336.9h8.5v8.5h-8.5zM908.6 339.5h8.5v8.5h-8.5zM910.1 342.1h8.5v8.5h-8.5zM911.6 344.7h8.5v8.5h-8.5zM913.1 347.3h8.5v8.5h-8.5zM914.5 349.8h8.5v8.5h-8.5zM916.0 352.4h8.5v8.5h-8.5zM917.5 355.0h8.5v8.5h-8.5zM919.0 357.6h8.5v8.5h-8.5zM920.4 360.1h8.5v8.5h-8.5zM921.9 362.7h8.5v8.5h-8.5zM923.4 365.3h8.5v8.5h-8.5zM924.9 367.9h8.5v8.5h-8.5zM926.3 370.4h8.5v8.5h-8.5zM928.1 372.8h8.5v8.5h-8.5zM929.9 375.2h8.5v8.5h-8.5zM931.7 377.6h8.5v8.5h-8.5zM933.5 380.0h8.5v8.5h-8.5zM935.3 382.4h8.5v8.5h-8.5zM937.1 384.8h8.5v8.5h-8.5zM938.9 387.2h8.5v8.5h-8.5zM940.7 389.6h8.5v8.5h-8.5zM941.9 392.3h8.5v8.5h-8.5zM943.1 395.0h8.5v8.5h-8.5zM944.2 397.8h8.5v8.5h-8.5zM945.5 400.5h8.5v8.5h-8.5zM946.7 403.1h8.5v8.5h-8.5zM947.8 405.9h8.5v8.5h-8.5zM949.0 408.5h8.5v8.5h-8.5zM950.2 411.2h8.5v8.5h-8.5zM907.2 315.4h8.5v8.5h-8.5zM907.6 318.2h8.5v8.5h-8.5zM908.0 320.9h8.5v8.5h-8.5zM908.3 323.8h8.5v8.5h-8.5zM908.8 326.6h8.5v8.5h-8.5zM909.2 329.3h8.5v8.5h-8.5zM909.5 332.1h8.5v8.5h-8.5zM910.5 334.9h8.5v8.5h-8.5zM911.4 337.7h8.5v8.5h-8.5zM912.3 340.5h8.5v8.5h-8.5zM913.3 343.3h8.5v8.5h-8.5zM914.2 346.1h8.5v8.5h-8.5zM915.1 348.9h8.5v8.5h-8.5zM916.1 351.7h8.5v8.5h-8.5zM917.0 354.5h8.5v8.5h-8.5zM917.9 357.3h8.5v8.5h-8.5zM918.9 360.1h8.5v8.5h-8.5zM919.8 362.9h8.5v8.5h-8.5zM920.8 365.7h8.5v8.5h-8.5zM921.7 368.5h8.5v8.5h-8.5zM922.6 371.3h8.5v8.5h-8.5zM923.5 374.1h8.5v8.5h-8.5zM924.5 376.9h8.5v8.5h-8.5zM925.4 379.7h8.5v8.5h-8.5zM926.3 382.4h8.5v8.5h-8.5zM925.2 408.9h8.5v8.5h-8.5zM925.0 411.6h8.5v8.5h-8.5zM924.8 414.5h8.5v8.5h-8.5zM924.6 417.2h8.5v8.5h-8.5zM924.4 420.0h8.5v8.5h-8.5zM924.2 422.9h8.5v8.5h-8.5zM924.0 425.6h8.5v8.5h-8.5zM924.5 428.5h8.5v8.5h-8.5zM925.2 431.2h8.5v8.5h-8.5zM925.8 434.0h8.5v8.5h-8.5zM926.3 436.9h8.5v8.5h-8.5zM927.0 439.7h8.5v8.5h-8.5zM927.5 442.5h8.5v8.5h-8.5zM927.2 445.2h8.5v8.5h-8.5zM926.9 447.9h8.5v8.5h-8.5zM926.5 450.7h8.5v8.5h-8.5zM926.2 453.4h8.5v8.5h-8.5zM925.8 456.2h8.5v8.5h-8.5zM925.5 458.9h8.5v8.5h-8.5zM925.2 461.6h8.5v8.5h-8.5zM935.8 414.9h8.5v8.5h-8.5zM962.2 416.0h8.5v8.5h-8.5zM962.2 418.9h8.5v8.5h-8.5zM962.2 421.6h8.5v8.5h-8.5zM962.2 424.5h8.5v8.5h-8.5zM974.2 430.5h8.5v8.5h-8.5zM986.2 408.9h8.5v8.5h-8.5zM987.2 411.1h8.5v8.5h-8.5zM988.0 413.4h8.5v8.5h-8.5zM988.9 415.7h8.5v8.5h-8.5zM989.8 418.0h8.5v8.5h-8.5zM969.5 441.2h8.5v8.5h-8.5zM971.0 443.4h8.5v8.5h-8.5zM972.5 445.5h8.5v8.5h-8.5zM974.0 447.5h8.5v8.5h-8.5zM975.5 449.6h8.5v8.5h-8.5zM977.2 451.5h8.5v8.5h-8.5zM979.1 453.2h8.5v8.5h-8.5zM980.9 455.0h8.5v8.5h-8.5zM982.7 456.9h8.5v8.5h-8.5zM965.8 460.5h8.5v8.5h-8.5zM950.2 480.9h8.5v8.5h-8.5zM948.3 483.0h8.5v8.5h-8.5zM946.4 485.1h8.5v8.5h-8.5zM944.5 487.3h8.5v8.5h-8.5zM942.6 489.4h8.5v8.5h-8.5zM940.7 491.5h8.5v8.5h-8.5zM940.3 494.1h8.5v8.5h-8.5zM940.0 496.7h8.5v8.5h-8.5zM939.6 499.3h8.5v8.5h-8.5zM939.3 501.8h8.5v8.5h-8.5zM938.9 504.4h8.5v8.5h-8.5zM938.6 507.0h8.5v8.5h-8.5zM938.2 509.5h8.5v8.5h-8.5zM937.7 512.3h8.5v8.5h-8.5zM937.0 515.1h8.5v8.5h-8.5zM936.5 518.0h8.5v8.5h-8.5zM935.9 520.8h8.5v8.5h-8.5zM935.2 523.5h8.5v8.5h-8.5zM934.7 526.4h8.5v8.5h-8.5zM935.6 529.0h8.5v8.5h-8.5zM936.6 531.6h8.5v8.5h-8.5zM937.5 534.3h8.5v8.5h-8.5zM938.5 536.9h8.5v8.5h-8.5zM939.5 539.5h8.5v8.5h-8.5zM938.5 541.6h8.5v8.5h-8.5zM937.7 543.8h8.5v8.5h-8.5zM936.8 545.9h8.5v8.5h-8.5zM935.8 548.0h8.5v8.5h-8.5zM1132.5 390.1h8.5v8.5h-8.5zM1183.3 390.1h8.5v8.5h-8.5zM1111.5 419.0h8.5v8.5h-8.5zM1115.8 441.2h8.5v8.5h-8.5zM273.2 330.6h8.5v8.5h-8.5zM271.8 333.1h8.5v8.5h-8.5zM270.3 335.6h8.5v8.5h-8.5zM268.9 338.1h8.5v8.5h-8.5zM267.4 340.6h8.5v8.5h-8.5zM265.9 343.1h8.5v8.5h-8.5zM264.5 345.6h8.5v8.5h-8.5zM263.0 348.1h8.5v8.5h-8.5zM261.5 350.6h8.5v8.5h-8.5zM259.2 351.2h8.5v8.5h-8.5zM256.9 351.9h8.5v8.5h-8.5zM254.6 352.5h8.5v8.5h-8.5zM252.3 353.2h8.5v8.5h-8.5zM250.0 353.9h8.5v8.5h-8.5zM247.3 353.7h8.5v8.5h-8.5zM244.7 353.6h8.5v8.5h-8.5zM242.1 353.5h8.5v8.5h-8.5zM239.5 353.4h8.5v8.5h-8.5zM236.9 353.3h8.5v8.5h-8.5zM234.3 353.2h8.5v8.5h-8.5zM231.6 353.1h8.5v8.5h-8.5zM235.0 362.1h8.5v8.5h-8.5zM235.4 364.6h8.5v8.5h-8.5zM235.8 367.1h8.5v8.5h-8.5zM236.2 369.6h8.5v8.5h-8.5zM236.6 372.1h8.5v8.5h-8.5zM234.2 373.6h8.5v8.5h-8.5zM231.7 375.0h8.5v8.5h-8.5zM229.2 376.5h8.5v8.5h-8.5zM226.7 377.9h8.5v8.5h-8.5zM224.2 379.4h8.5v8.5h-8.5zM221.7 380.9h8.5v8.5h-8.5zM219.2 382.3h8.5v8.5h-8.5zM216.8 383.8h8.5v8.5h-8.5zM215.1 385.7h8.5v8.5h-8.5zM213.4 387.6h8.5v8.5h-8.5zM211.8 389.6h8.5v8.5h-8.5zM210.1 391.5h8.5v8.5h-8.5zM208.4 393.4h8.5v8.5h-8.5zM206.8 395.4h8.5v8.5h-8.5zM206.8 398.1h8.5v8.5h-8.5zM206.8 400.9h8.5v8.5h-8.5zM206.8 403.6h8.5v8.5h-8.5zM213.5 412.0h8.5v8.5h-8.5zM211.8 414.3h8.5v8.5h-8.5zM210.1 416.6h8.5v8.5h-8.5zM208.4 419.0h8.5v8.5h-8.5zM206.7 421.3h8.5v8.5h-8.5zM205.0 423.6h8.5v8.5h-8.5zM204.2 426.4h8.5v8.5h-8.5zM203.4 429.0h8.5v8.5h-8.5zM202.6 431.8h8.5v8.5h-8.5zM201.8 434.5h8.5v8.5h-8.5zM200.9 437.1h8.5v8.5h-8.5zM200.1 439.9h8.5v8.5h-8.5zM199.3 442.5h8.5v8.5h-8.5zM198.5 445.2h8.5v8.5h-8.5zM198.3 448.1h8.5v8.5h-8.5zM198.2 450.9h8.5v8.5h-8.5zM198.0 453.7h8.5v8.5h-8.5zM197.9 456.5h8.5v8.5h-8.5zM197.8 459.4h8.5v8.5h-8.5zM197.6 462.2h8.5v8.5h-8.5zM197.5 465.0h8.5v8.5h-8.5zM197.4 467.9h8.5v8.5h-8.5zM196.0 470.4h8.5v8.5h-8.5zM194.6 472.9h8.5v8.5h-8.5zM193.2 475.5h8.5v8.5h-8.5zM191.8 478.0h8.5v8.5h-8.5zM190.4 480.5h8.5v8.5h-8.5zM189.0 483.1h8.5v8.5h-8.5zM187.6 485.6h8.5v8.5h-8.5zM186.2 488.1h8.5v8.5h-8.5zM186.5 491.0h8.5v8.5h-8.5zM186.8 494.0h8.5v8.5h-8.5zM187.0 496.9h8.5v8.5h-8.5zM187.3 499.8h8.5v8.5h-8.5zM187.5 502.6h8.5v8.5h-8.5zM187.8 505.6h8.5v8.5h-8.5zM188.0 508.5h8.5v8.5h-8.5zM220.0 423.6h8.5v8.5h-8.5zM151.1 451.2h8.5v8.5h-8.5zM150.4 453.9h8.5v8.5h-8.5zM149.7 456.5h8.5v8.5h-8.5zM148.9 459.0h8.5v8.5h-8.5zM148.2 461.6h8.5v8.5h-8.5zM147.5 464.2h8.5v8.5h-8.5zM148.1 466.7h8.5v8.5h-8.5zM148.7 469.1h8.5v8.5h-8.5zM149.3 471.6h8.5v8.5h-8.5zM149.9 474.1h8.5v8.5h-8.5zM150.5 476.5h8.5v8.5h-8.5zM151.1 479.0h8.5v8.5h-8.5zM147.5 488.1h8.5v8.5h-8.5zM145.2 490.0h8.5v8.5h-8.5zM142.9 491.8h8.5v8.5h-8.5zM140.5 493.7h8.5v8.5h-8.5zM138.2 495.5h8.5v8.5h-8.5zM138.2 498.3h8.5v8.5h-8.5zM138.2 501.1h8.5v8.5h-8.5zM138.2 503.9h8.5v8.5h-8.5zM138.2 506.6h8.5v8.5h-8.5zM197.4 517.8h8.5v8.5h-8.5zM196.6 520.6h8.5v8.5h-8.5zM195.8 523.5h8.5v8.5h-8.5zM195.0 526.4h8.5v8.5h-8.5zM194.1 529.3h8.5v8.5h-8.5zM193.4 532.2h8.5v8.5h-8.5zM192.5 535.1h8.5v8.5h-8.5zM191.8 538.0h8.5v8.5h-8.5zM191.5 540.6h8.5v8.5h-8.5zM191.2 543.2h8.5v8.5h-8.5zM191.0 545.9h8.5v8.5h-8.5zM190.7 548.5h8.5v8.5h-8.5zM190.5 551.2h8.5v8.5h-8.5zM190.2 553.8h8.5v8.5h-8.5zM190.0 556.5h8.5v8.5h-8.5zM194.5 562.0h8.5v8.5h-8.5zM194.5 564.7h8.5v8.5h-8.5zM194.5 567.5h8.5v8.5h-8.5zM194.5 570.2h8.5v8.5h-8.5zM194.5 573.0h8.5v8.5h-8.5zM194.5 575.8h8.5v8.5h-8.5zM194.5 578.5h8.5v8.5h-8.5zM193.8 581.3h8.5v8.5h-8.5zM193.0 584.1h8.5v8.5h-8.5zM192.2 586.8h8.5v8.5h-8.5zM191.5 589.6h8.5v8.5h-8.5zM190.7 592.4h8.5v8.5h-8.5zM190.0 595.1h8.5v8.5h-8.5zM130.5 558.2h8.5v8.5h-8.5zM171.5 600.8h8.5v8.5h-8.5zM134.5 610.0h8.5v8.5h-8.5zM134.9 612.7h8.5v8.5h-8.5zM135.2 615.5h8.5v8.5h-8.5zM135.5 618.2h8.5v8.5h-8.5zM135.8 621.0h8.5v8.5h-8.5zM136.1 623.8h8.5v8.5h-8.5zM136.5 626.5h8.5v8.5h-8.5z" fill="#f00" stroke="none"/></g></svg>
<svg class="r" style="left:367px;top:533px;" width="6" height="9" viewBox="0 0 6 9"><path d="M5.5 0V8.5L0.5 4.25Z" fill="#444"/></svg>
<div class="r" style="left:359px;top:530px;width:1px;height:1px;background:#999;"></div>
<div class="r" style="left:359px;top:533px;width:1px;height:1px;background:#999;"></div>
<div class="r" style="left:359px;top:536px;width:1px;height:1px;background:#999;"></div>
<div class="r" style="left:359px;top:539px;width:1px;height:1px;background:#999;"></div>
<div class="r" style="left:359px;top:542px;width:1px;height:1px;background:#999;"></div>
<div class="r" style="left:359px;top:545px;width:1px;height:1px;background:#999;"></div>
<svg class="r" style="left:1638px;top:533px;" width="6" height="9" viewBox="0 0 6 9"><path d="M0.5 0V8.5L5.5 4.25Z" fill="#444"/></svg>
<div class="r" style="left:1652px;top:530px;width:1px;height:1px;background:#999;"></div>
<div class="r" style="left:1652px;top:533px;width:1px;height:1px;background:#999;"></div>
<div class="r" style="left:1652px;top:536px;width:1px;height:1px;background:#999;"></div>
<div class="r" style="left:1652px;top:539px;width:1px;height:1px;background:#999;"></div>
<div class="r" style="left:1652px;top:542px;width:1px;height:1px;background:#999;"></div>
<div class="r" style="left:1652px;top:545px;width:1px;height:1px;background:#999;"></div>
<div class="r" style="left:959px;top:975px;width:1px;height:1px;background:#999;"></div>
<div class="r" style="left:962px;top:975px;width:1px;height:1px;background:#999;"></div>
<div class="r" style="left:965px;top:975px;width:1px;height:1px;background:#999;"></div>
<div class="r" style="left:968px;top:975px;width:1px;height:1px;background:#999;"></div>
<div class="r" style="left:971px;top:975px;width:1px;height:1px;background:#999;"></div>
<div class="r" style="left:974px;top:975px;width:1px;height:1px;background:#999;"></div>
<div class="r" style="left:1655px;top:101px;width:265px;height:27px;background:#b9b9b9;"></div>
<svg class="r" style="left:1658px;top:110px;" width="18" height="11" viewBox="0 0 18 11"><path d="M1 0.6V9.4L7 5Z" fill="#444"/><rect x="6.6" y="1" width="10.4" height="7.8" rx="2.6" fill="#444"/></svg>
<div class="t" style="left:1681.2px;top:107.90px;font-size:15px;color:#111;font-weight:normal;">Views</div>
<div class="r" style="left:1906px;top:106px;width:17px;height:16px;background:#fbfbfb;border:1px solid #9a9a9a;border-radius:3px;"></div>
<svg class="r" style="left:1909px;top:108.5px;" width="11" height="11" viewBox="0 0 11 11"><defs><radialGradient id="cg" cx="0.4" cy="0.35" r="0.7"><stop offset="0" stop-color="#f04040"/><stop offset="1" stop-color="#b01010"/></radialGradient></defs><path d="M3.3 0.3H7.7L10.7 3.3V7.7L7.7 10.7H3.3L0.3 7.7V3.3Z" fill="url(#cg)"/><path d="M3.5 3.5L7.5 7.5M7.5 3.5L3.5 7.5" stroke="#fff" stroke-width="1.5"/></svg>
<div class="t" style="left:1658px;top:143.30px;font-size:15px;color:#111;font-weight:normal;">Type:</div>
<div class="r" style="left:1701px;top:134px;width:137px;height:31px;background:linear-gradient(180deg,#fbfbfb,#efefef);border:1px solid #b3b3b3;border-radius:3px;"></div>
<div class="r" style="left:1706px;top:136px;width:110px;height:26px;overflow:hidden;">
<div class="t" style="left:0.3px;top:7.30px;font-size:15px;color:#111;">Orbit (rviz_default_plugins)</div>
<div class="r" style="right:0;top:0;width:8px;height:26px;background:linear-gradient(90deg,rgba(247,247,247,0),#f6f6f6);"></div>
</div>
<svg class="r" style="left:1822px;top:147px;" width="9" height="5" viewBox="0 0 9 5"><path d="M0.5 0.5H8.5L4.5 4.5Z" fill="#555"/></svg>
<div class="r" style="left:1844px;top:134px;width:90px;height:31px;background:linear-gradient(180deg,#fbfbfb,#efefef);border:1px solid #b3b3b3;border-radius:3px;"></div>
<div class="t" style="left:1868.6px;top:143.30px;font-size:15px;color:#111;font-weight:normal;">Zero</div>
<div class="r" style="left:1655px;top:173px;width:275px;height:761px;background:#fff;border:1px solid #b4b4b4;"></div>
<div class="r" style="left:1790px;top:174px;width:1px;height:759px;background:#dcdcdc;"></div>
<div class="t" style="left:1679.6px;top:177.80px;font-size:15px;color:#111;font-weight:bold;">Current View</div>
<div class="t" style="left:1793.5px;top:177.80px;font-size:15px;color:#111;font-weight:bold;">Orbit (rviz)</div>
<div class="t" style="left:1699.5px;top:201.50px;font-size:15px;color:#111;font-weight:normal;">Near Clip ···</div>
<div class="t" style="left:1793.5px;top:201.50px;font-size:15px;color:#111;font-weight:normal;">0.01</div>
<div class="t" style="left:1699.5px;top:224.50px;font-size:15px;color:#111;font-weight:normal;">Invert Z Axis</div>
<div class="t" style="left:1699.5px;top:247.50px;font-size:15px;color:#111;font-weight:normal;">Target Fra···</div>
<div class="t" style="left:1793.5px;top:247.50px;font-size:15px;color:#111;font-weight:normal;">&lt;Fixed Frame&gt;</div>
<div class="t" style="left:1699.5px;top:270.50px;font-size:15px;color:#111;font-weight:normal;">Distance</div>
<div class="t" style="left:1793.5px;top:270.50px;font-size:15px;color:#111;font-weight:normal;">1.27451</div>
<div class="t" style="left:1699.5px;top:293.50px;font-size:15px;color:#111;font-weight:normal;">Focal Sha···</div>
<div class="t" style="left:1793.5px;top:293.50px;font-size:15px;color:#111;font-weight:normal;">0.05</div>
<div class="t" style="left:1699.5px;top:316.50px;font-size:15px;color:#111;font-weight:normal;">Focal Sha···</div>
<div class="t" style="left:1699.5px;top:339.50px;font-size:15px;color:#111;font-weight:normal;">Yaw</div>
<div class="t" style="left:1793.5px;top:339.50px;font-size:15px;color:#111;font-weight:normal;">4.68494</div>
<div class="t" style="left:1699.5px;top:362.50px;font-size:15px;color:#111;font-weight:normal;">Pitch</div>
<div class="t" style="left:1793.5px;top:362.50px;font-size:15px;color:#111;font-weight:normal;">1.5698</div>
<div class="t" style="left:1699.5px;top:385.50px;font-size:15px;color:#111;font-weight:normal;">Focal Point</div>
<div class="t" style="left:1793.5px;top:385.50px;font-size:15px;color:#111;font-weight:normal;">0.17651; 0.1668···</div>
<svg class="r" style="left:1662px;top:183px;" width="9" height="5" viewBox="0 0 9 5"><path d="M0.5 0.5H8L4.25 4.5Z" fill="#555"/></svg>
<svg class="r" style="left:1684px;top:389px;" width="5" height="8" viewBox="0 0 5 8"><path d="M0.5 0V7.5L4.5 3.75Z" fill="#555"/></svg>
<svg class="r" style="left:1793px;top:224px;" width="14" height="14" viewBox="0 0 14 14"><rect x="0.5" y="0.5" width="13" height="13" fill="#fff" stroke="#a8a8a8"/></svg>
<svg class="r" style="left:1793px;top:316px;" width="14" height="14" viewBox="0 0 14 14"><rect x="0.5" y="0.5" width="13" height="13" fill="#fff" stroke="#a8a8a8"/><path d="M3.2 7.2L5.8 10.5L10.8 3.2" fill="none" stroke="#000" stroke-width="1.8"/></svg>
<div class="r" style="left:1657px;top:940px;width:85px;height:31px;background:linear-gradient(180deg,#fbfbfb,#efefef);border:1px solid #b3b3b3;border-radius:3px;"></div>
<div class="t" style="left:1683.5px;top:948.10px;font-size:15px;color:#111;font-weight:normal;">Save</div>
<div class="r" style="left:1748px;top:940px;width:85px;height:31px;background:linear-gradient(180deg,#fbfbfb,#efefef);border:1px solid #b3b3b3;border-radius:3px;"></div>
<div class="t" style="left:1762px;top:948.10px;font-size:15px;color:#111;font-weight:normal;">Remove</div>
<div class="r" style="left:1839px;top:940px;width:90px;height:31px;background:linear-gradient(180deg,#fbfbfb,#efefef);border:1px solid #b3b3b3;border-radius:3px;"></div>
<div class="t" style="left:1852.5px;top:948.10px;font-size:15px;color:#111;font-weight:normal;">Rename</div>
<div class="r" style="left:6px;top:979px;width:1914px;height:27px;background:#b9b9b9;"></div>
<svg class="r" style="left:10px;top:985px;" width="16" height="16" viewBox="0 0 16 16"><circle cx="8" cy="8" r="6.9" fill="#fff" stroke="#5e5e5e" stroke-width="1.5"/><path d="M7.5 3.5V8.3H11.5" fill="none" stroke="#111" stroke-width="1.3"/></svg>
<div class="t" style="left:33px;top:985.70px;font-size:15px;color:#111;font-weight:normal;">Time</div>
<div class="r" style="left:1906px;top:984px;width:17px;height:16px;background:#fbfbfb;border:1px solid #9a9a9a;border-radius:3px;"></div>
<svg class="r" style="left:1909px;top:986.5px;" width="11" height="11" viewBox="0 0 11 11"><defs><radialGradient id="cg" cx="0.4" cy="0.35" r="0.7"><stop offset="0" stop-color="#f04040"/><stop offset="1" stop-color="#b01010"/></radialGradient></defs><path d="M3.3 0.3H7.7L10.7 3.3V7.7L7.7 10.7H3.3L0.3 7.7V3.3Z" fill="url(#cg)"/><path d="M3.5 3.5L7.5 7.5M7.5 3.5L3.5 7.5" stroke="#fff" stroke-width="1.5"/></svg>
<div class="t" style="left:17.5px;top:1021.10px;font-size:15px;color:#111;font-weight:normal;">ROS Time:</div>
<div class="r" style="left:96px;top:1011px;width:125px;height:31px;background:#fff;border:1px solid #b3b3b3;border-radius:2px;"></div>
<div class="t" style="left:99.3px;top:1021.10px;font-size:15px;color:#111;font-weight:normal;">1674381360.25</div>
<div class="t" style="left:227.5px;top:1021.10px;font-size:15px;color:#111;font-weight:normal;">ROS Elapsed:</div>
<div class="r" style="left:326px;top:1011px;width:125px;height:31px;background:#fff;border:1px solid #b3b3b3;border-radius:2px;"></div>
<div class="t" style="left:329.3px;top:1021.10px;font-size:15px;color:#111;font-weight:normal;">1515.13</div>
<div class="t" style="left:457.5px;top:1021.10px;font-size:15px;color:#111;font-weight:normal;">Wall Time:</div>
<div class="r" style="left:536px;top:1011px;width:125px;height:31px;background:#fff;border:1px solid #b3b3b3;border-radius:2px;"></div>
<div class="t" style="left:539.3px;top:1021.10px;font-size:15px;color:#111;font-weight:normal;">1674381360.28</div>
<div class="t" style="left:667.5px;top:1021.10px;font-size:15px;color:#111;font-weight:normal;">Wall Elapsed:</div>
<div class="r" style="left:766px;top:1011px;width:125px;height:31px;background:#fff;border:1px solid #b3b3b3;border-radius:2px;"></div>
<div class="t" style="left:769.3px;top:1021.10px;font-size:15px;color:#111;font-weight:normal;">1515.13</div>
<svg class="r" style="left:1797px;top:1019px;" width="14" height="14" viewBox="0 0 14 14"><rect x="0.5" y="0.5" width="13" height="13" fill="#fff" stroke="#a8a8a8"/></svg>
<div class="t" style="left:1816.8px;top:1020.68px;font-size:15.5px;color:#111;font-weight:normal;">Experimental</div>
<div class="r" style="left:8px;top:1050px;width:53px;height:30px;background:linear-gradient(180deg,#fbfbfb,#efefef);border:1px solid #b3b3b3;border-radius:3px;"></div>
<div class="t" style="left:16px;top:1057.60px;font-size:15px;color:#111;font-weight:normal;">Reset</div>
<div class="t" style="left:1883.8px;top:1054.80px;font-size:15px;color:#111;font-weight:normal;">31 fps</div>
</body></html>
